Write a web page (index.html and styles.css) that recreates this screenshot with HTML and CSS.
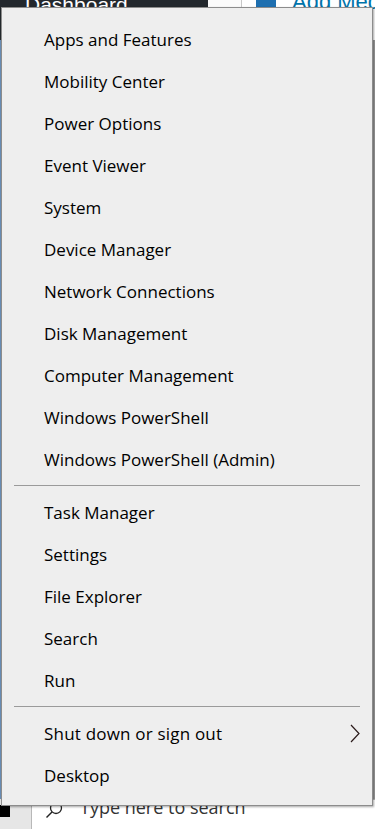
FILE: index.html
```html
<!DOCTYPE html>
<html>
<head>
<meta charset="utf-8">
<link rel="stylesheet" href="styles.css">
</head>
<body>
<div class="screen">
  <div class="wp-top">
    <div class="wp-sidebar"><span class="wp-dash">Dashboard</span></div>
    <div class="wp-gap"></div>
    <div class="wp-editor">
      <span class="media-icon"></span>
      <span class="media-text">Add Media</span>
    </div>
  </div>
  <div class="wp-middle">
    <div class="wp-left-edge"></div>
    <div class="wp-content"></div>
  </div>
  <div class="taskbar">
    <div class="tb-left"><span class="tb-block"></span></div>
    <div class="tb-search">
      <svg class="tb-icon" width="18" height="18" viewBox="0 0 18 18"><circle cx="11" cy="7" r="5.5" fill="none" stroke="#222" stroke-width="1.3"/><line x1="7" y1="11" x2="1.5" y2="16.5" stroke="#222" stroke-width="1.5"/></svg>
      <span class="tb-text">Type here to search</span>
    </div>
  </div>

  <div class="winx-menu">
    <div class="item">Apps and Features</div>
    <div class="item">Mobility Center</div>
    <div class="item">Power Options</div>
    <div class="item">Event Viewer</div>
    <div class="item">System</div>
    <div class="item">Device Manager</div>
    <div class="item">Network Connections</div>
    <div class="item">Disk Management</div>
    <div class="item">Computer Management</div>
    <div class="item">Windows PowerShell</div>
    <div class="item">Windows PowerShell (Admin)</div>
    <div class="sep sep-a"></div>
    <div class="item">Task Manager</div>
    <div class="item">Settings</div>
    <div class="item">File Explorer</div>
    <div class="item">Search</div>
    <div class="item">Run</div>
    <div class="sep sep-b"></div>
    <div class="item item-sub">
      <span class="sub-label">Shut down or sign out</span>
      <svg class="chev" width="10" height="19" viewBox="0 0 10 19"><polyline points="1,1 9,9.5 1,18" fill="none" stroke="#2a1a1a" stroke-width="1.2"/></svg>
    </div>
    <div class="item">Desktop</div>
  </div>
</div>
</body>
</html>
```

FILE: styles.css
```css
* { box-sizing: border-box; }
html, body { margin: 0; padding: 0; }
body {
  width: 375px;
  height: 829px;
  overflow: hidden;
  font-family: "Open Sans", "Noto Sans", "Liberation Sans", sans-serif;
  background: #f1f1f1;
}
.screen {
  position: relative;
  width: 375px;
  height: 829px;
  display: flex;
  flex-direction: column;
  overflow: hidden;
}

/* backdrop: top */
.wp-top {
  display: flex;
  height: 40px;
  flex: none;
}
.wp-sidebar {
  width: 208px;
  background: #23282d;
  padding-left: 25px;
  overflow: hidden;
}
.wp-dash {
  display: block;
  margin-top: -8px;
  color: #fff;
  font-size: 21px;
  line-height: 26px;
  white-space: nowrap;
  font-family: "Liberation Sans", Arial, sans-serif;
}
.wp-gap {
  width: 34px;
  background: #fbfbfb;
  border-right: 1px solid #c8c8c8;
}
.wp-editor {
  flex: 1;
  min-width: 0;
  background: #fff;
  display: flex;
  align-items: flex-start;
  padding-left: 14px;
  gap: 16px;
  overflow: hidden;
}
.media-icon {
  flex: none;
  width: 20px;
  height: 20px;
  margin-top: -8px;
  background: #1e6fb0;
  border-radius: 2px;
}
.media-text {
  color: #0073aa;
  font-size: 22px;
  line-height: 26px;
  margin-top: -11px;
  white-space: nowrap;
  font-family: "Liberation Sans", Arial, sans-serif;
}

/* backdrop: middle */
.wp-middle {
  flex: 1;
  display: flex;
}
.wp-left-edge {
  width: 2px;
  background: #6a8fb8;
}
.wp-content {
  flex: 1;
  background: #e9e9e9;
  border-right: 2px solid #9a9a9a;
}

/* backdrop: taskbar */
.taskbar {
  flex: none;
  height: 30px;
  display: flex;
  background: #e6e6e6;
}
.tb-left {
  width: 31px;
  padding-top: 6px;
}
.tb-block {
  display: block;
  width: 10px;
  height: 12px;
  background: #000;
}
.tb-search {
  flex: 1;
  background: #fff;
  border-left: 1px solid #b8b8b8;
  border-top: 1px solid #b8b8b8;
  display: flex;
  align-items: flex-start;
  padding-left: 13px;
  gap: 17px;
}
.tb-icon { margin-top: 1px; flex: none; }
.tb-text {
  color: #333;
  font-size: 18px;
  line-height: 24px;
  margin-top: -5px;
  white-space: nowrap;
  font-family: "Open Sans", sans-serif;
}

/* the Win+X menu (popup over the backdrop) */
.winx-menu {
  position: absolute;
  left: 1px;
  top: 7px;
  width: 372px;
  height: 799px;
  background: #eeeeee;
  border: 1px solid #8c8c8c;
  box-shadow: 1px 1px 2px rgba(0,0,0,0.35);
  padding: 10px 0 0 0;
  display: flex;
  flex-direction: column;
}
.item {
  height: 42px;
  display: flex;
  align-items: center;
  padding-left: 42px;
  padding-right: 12px;
  font-size: 17px;
  color: #000;
  white-space: nowrap;
}
.item-sub { justify-content: space-between; }
.sub-label { letter-spacing: 0.2px; }
.chev { flex: none; }
.sep {
  height: 1px;
  background: #9a9a9a;
  margin-left: 12px;
  margin-right: 12px;
}
.sep-a { margin-top: 5px; margin-bottom: 5px; }
.sep-b { margin-top: 5px; margin-bottom: 5px; }
```
